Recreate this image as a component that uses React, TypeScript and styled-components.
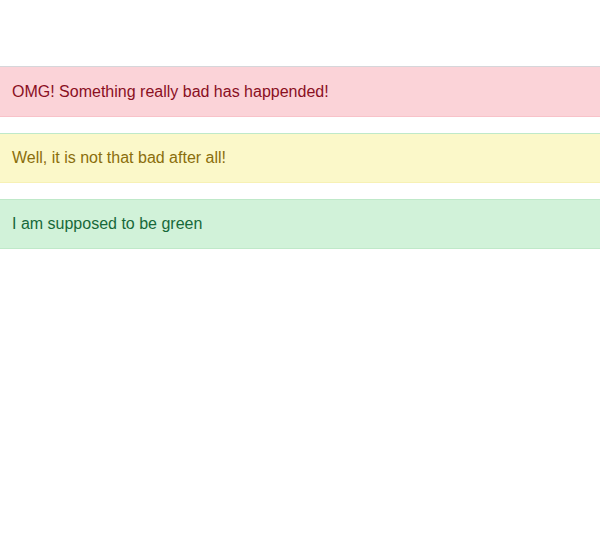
import React from "react";
import styled, { createGlobalStyle } from "styled-components";

const GlobalStyle = createGlobalStyle`
  body {
    margin: 0;
    background: #ffffff;
    font-family: "Liberation Sans", Arial, sans-serif;
  }
`;

type Variant = "danger" | "warning" | "success";

const palette: Record<Variant, { bg: string; border: string; text: string }> = {
  danger: { bg: "#fbd3d8", border: "#f8c2c9", text: "#8a0f1f" },
  warning: { bg: "#fbf8c9", border: "#f7f1b5", text: "#8a6e0c" },
  success: { bg: "#d1f2d9", border: "#bfe9c9", text: "#17693a" },
};

const StyledHeader = styled.header`
  height: 66px;
  border-bottom: 1px solid #d6d6da;
`;

const StyledList = styled.main`
  display: flex;
  flex-direction: column;
  gap: 16px;
`;

const StyledAlert = styled.div<{ $variant: Variant }>`
  box-sizing: border-box;
  height: 50px;
  padding: 0 12px;
  display: flex;
  align-items: center;
  font-size: 16px;
  background: ${(p) => palette[p.$variant].bg};
  color: ${(p) => palette[p.$variant].text};
  border-bottom: 1px solid ${(p) => palette[p.$variant].border};

  & + & {
    border-top: 1px solid ${(p) => palette[p.$variant].border};
  }
`;

const alerts: { id: number; variant: Variant; text: string }[] = [
  { id: 1, variant: "danger", text: "OMG! Something really bad has happended!" },
  { id: 2, variant: "warning", text: "Well, it is not that bad after all!" },
  { id: 3, variant: "success", text: "I am supposed to be green" },
];

const App: React.FC = () => {
  return (
    <>
      <GlobalStyle />
      <StyledHeader />
      <StyledList>
        {alerts.map((a) => (
          <StyledAlert key={a.id} $variant={a.variant}>
            {a.text}
          </StyledAlert>
        ))}
      </StyledList>
    </>
  );
};

export default App;
